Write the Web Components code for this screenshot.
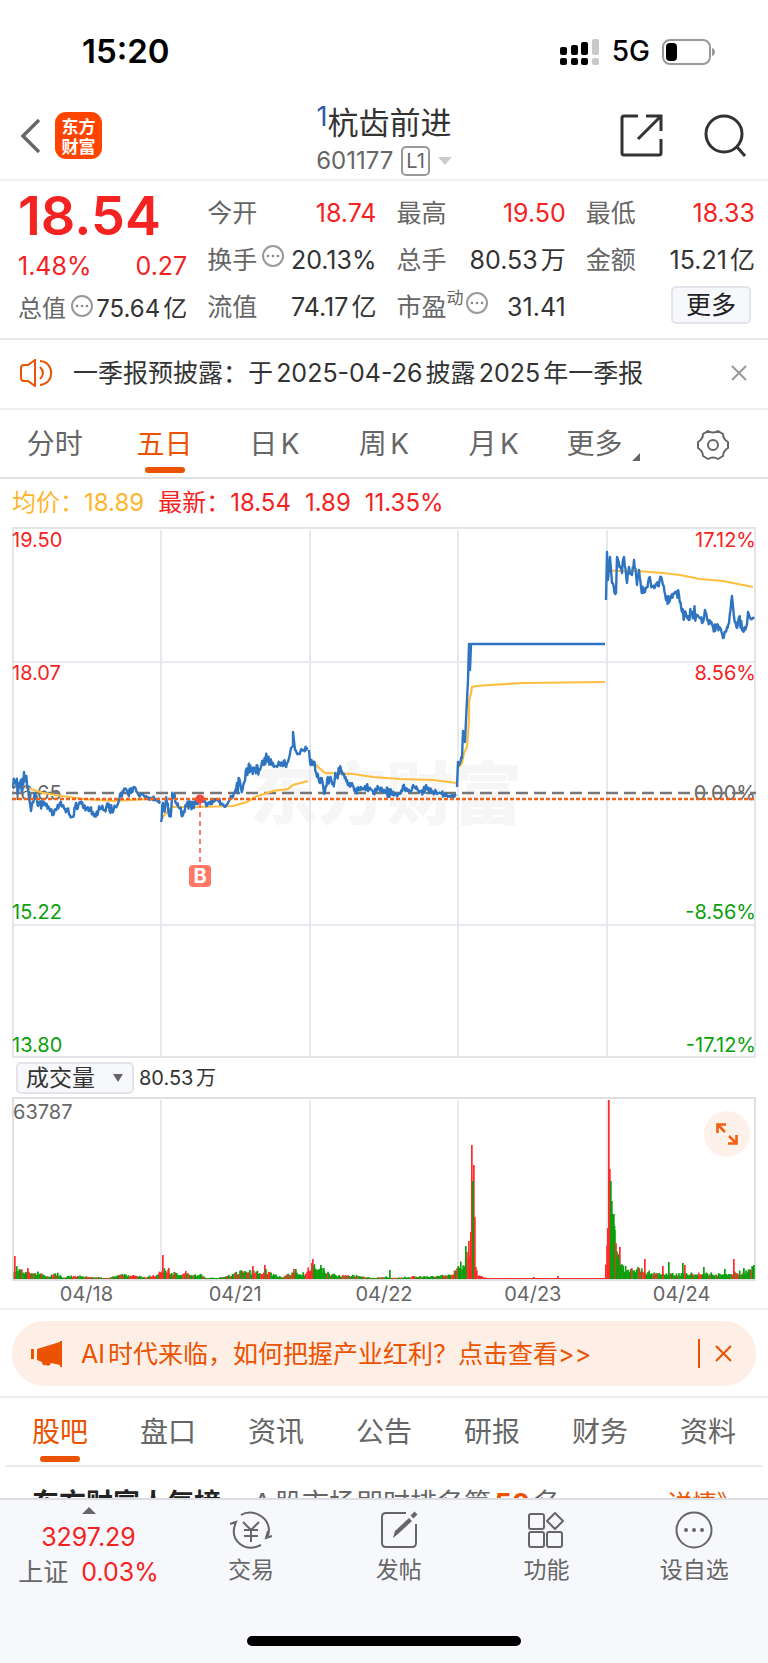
<!DOCTYPE html>
<html lang="zh-CN">
<head>
<meta charset="UTF-8">
<meta name="viewport" content="width=device-width, initial-scale=1">
<title>杭齿前进 601177</title>
<style>
    :root {
        --red: #f52222;
        --green: #0a9f0a;
        --orange: #ec5300;
        --text: #333;
        --muted: #666;
        --line: #e8e8ea;
        --panel: #f7f8fb;
    }
    body {
        margin: 0;
        background: #fff;
        color: var(--text);
        font-family: Inter, "Noto Sans CJK SC", sans-serif;
        line-height: 1.2;
        text-autospace: normal;
    }
</style>
</head>
<body>
<stock-app></stock-app>

<script>
const BASE = `
    * { box-sizing: border-box; }
    button, select { font: inherit; color: inherit; background: none; border: 0; padding: 0; margin: 0; cursor: pointer; }
    a { color: inherit; text-decoration: none; }
    svg { display: block; flex: none; }
`;

function define(tag, html, setup) {
    customElements.define(tag, class extends HTMLElement {
        connectedCallback() {
            if (this.shadowRoot) return;
            this.attachShadow({ mode: 'open' });
            this.shadowRoot.innerHTML = `<style>${BASE}</style>${html}`;
            if (setup) setup(this.shadowRoot, this);
        }
    });
}

// small repeatable random source for minute noise
function noise(seed) {
    return () => {
        seed = (seed * 16807) % 2147483647;
        return seed / 2147483647;
    };
}

define('status-bar', `
    <style>
        :host {
            display: flex;
            align-items: center;
            justify-content: space-between;
            height: 92px;
            padding: 12px 52px 0 82px;
            color: #000;
        }
        time { font-size: 33px; font-weight: 600; }
        .right { display: flex; align-items: center; gap: 12px; font-size: 28px; font-weight: 500; }
    </style>
    <time>15:20</time>
    <div class="right">
        <svg width="40" height="26" viewBox="0 0 40 26">
            <rect x="0" y="8" width="7" height="8" rx="2"/>
            <rect x="11" y="6" width="7" height="10" rx="2"/>
            <rect x="21" y="3" width="7" height="13" rx="2"/>
            <rect x="32" y="0" width="7" height="16" rx="2" fill="#c9c9c9"/>
            <rect x="0" y="19" width="7" height="7" rx="2"/>
            <rect x="11" y="19" width="7" height="7" rx="2"/>
            <rect x="21" y="19" width="7" height="7" rx="2"/>
            <rect x="32" y="19" width="7" height="7" rx="2" fill="#c9c9c9"/>
        </svg>
        <span>5G</span>
        <svg width="54" height="26" viewBox="0 0 54 26">
            <rect x="1" y="1" width="47" height="24" rx="7" fill="none" stroke="#999" stroke-width="2"/>
            <rect x="4" y="4" width="11" height="18" rx="4"/>
            <path d="M50 9c4 1 4 7 0 8z" fill="#999"/>
        </svg>
    </div>
`);

define('stock-header', `
    <style>
        :host {
            display: grid;
            grid-template-columns: 1fr auto 1fr;
            align-items: center;
            height: 89px;
            padding: 0 21px;
            border-bottom: 2px solid #f0f0f0;
        }
        .left, .right { display: flex; align-items: center; }
        .left { gap: 14px; }
        .right { justify-content: flex-end; gap: 41px; }
        .logo {
            width: 47px;
            height: 47px;
            padding-top: 4px;
            border-radius: 11px;
            background: #ff4400;
            color: #fff;
            font: 700 17px/20px "Noto Sans CJK SC", sans-serif;
            text-align: center;
        }
        .title { align-self: end; text-align: center; }
        h1 {
            display: flex;
            justify-content: center;
            margin: 0;
            font-size: 31px;
            font-weight: 400;
            line-height: 40px;
        }
        sup { font-size: 27px; line-height: 28px; color: #2b57a8; }
        .code {
            display: flex;
            align-items: center;
            justify-content: center;
            gap: 8px;
            font-size: 24px;
            line-height: 36px;
            color: var(--muted);
        }
        .level {
            padding: 0 3px;
            border: 2px solid #999;
            border-radius: 5px;
            font-size: 20px;
            line-height: 26px;
        }
    </style>
    <div class="left">
        <button aria-label="返回">
            <svg width="20" height="34" viewBox="0 0 20 34" fill="none" stroke="#666" stroke-width="3.4"><path d="M18 1 2 17l16 16"/></svg>
        </button>
        <div class="logo">东方<br>财富</div>
    </div>
    <div class="title">
        <h1><sup>1</sup>杭齿前进</h1>
        <div class="code">601177<span class="level">L1</span>
            <svg width="14" height="8" viewBox="0 0 14 8"><path d="M0 0h14L7 8z" fill="#ccc"/></svg>
        </div>
    </div>
    <div class="right">
        <button aria-label="分享">
            <svg width="43" height="43" viewBox="0 0 43 43" fill="none" stroke="#333" stroke-width="3">
                <path d="M18 2H4q-2 0-2 2v35q0 2 2 2h35q2 0 2-2V25M26 2h15v15M41 2 18 25"/>
            </svg>
        </button>
        <button aria-label="搜索">
            <svg width="43" height="43" viewBox="0 0 43 43" fill="none" stroke="#333" stroke-width="3">
                <circle cx="20" cy="20" r="18"/><path d="m33 33 8 9"/>
            </svg>
        </button>
    </div>
`);

define('more-dots', `
    <style>:host { display: inline-block; }</style>
    <svg width="22" height="22" viewBox="0 0 22 22">
        <circle cx="11" cy="11" r="10" fill="none" stroke="#999" stroke-width="2"/>
        <g fill="#888"><circle cx="6" cy="11" r="1.3"/><circle cx="11" cy="11" r="1.3"/><circle cx="16" cy="11" r="1.3"/></g>
    </svg>
`);

define('quote-item', `
    <style>
        :host {
            display: flex;
            align-items: center;
            justify-content: space-between;
            font-size: 25px;
            white-space: nowrap;
        }
        .label { display: flex; align-items: center; color: var(--muted); }
        :host([up]) .value { color: var(--red); }
    </style>
    <span class="label"><slot name="label"></slot></span>
    <span class="value"><slot></slot></span>
`);

define('quote-panel', `
    <style>
        :host {
            display: grid;
            grid-template-columns: repeat(4, minmax(0, 1fr));
            column-gap: 20px;
            padding: 8px 13px 8px 18px;
            border-bottom: 2px solid var(--line);
        }
        .main { display: grid; grid-template-rows: 54px 45px 42px; }
        .main quote-item { font-size: 24px; }
        .price { font-size: 54px; font-weight: 600; line-height: 54px; color: var(--red); }
        .change { display: flex; align-items: center; justify-content: space-between; font-size: 25px; color: var(--red); }
        .grid { grid-column: span 3; display: grid; grid-template-columns: repeat(3, minmax(0, 1fr)); grid-auto-rows: 47px; column-gap: 20px; }
        more-dots { align-self: start; margin-left: 5px; }
        .small { align-self: start; margin-top: -4px; font-size: 17px; }
        .small + more-dots { margin-left: 2px; }
        .more {
            justify-self: end;
            align-self: center;
            padding: 0 13px;
            margin: 0 4px 4px 0;
            border: 2px solid #e2e4ea;
            border-radius: 5px;
            background: var(--panel);
            font-size: 25px;
            line-height: 34px;
            color: #222;
        }
    </style>
    <div class="main">
        <div class="price">18.54</div>
        <div class="change"><span>1.48%</span><span>0.27</span></div>
        <quote-item><span slot="label">总值</span><more-dots slot="label"></more-dots>75.64亿</quote-item>
    </div>
    <div class="grid">
        <quote-item up><span slot="label">今开</span>18.74</quote-item>
        <quote-item up><span slot="label">最高</span>19.50</quote-item>
        <quote-item up><span slot="label">最低</span>18.33</quote-item>
        <quote-item><span slot="label">换手</span><more-dots slot="label"></more-dots>20.13%</quote-item>
        <quote-item><span slot="label">总手</span>80.53万</quote-item>
        <quote-item><span slot="label">金额</span>15.21亿</quote-item>
        <quote-item><span slot="label">流值</span>74.17亿</quote-item>
        <quote-item><span slot="label">市盈</span><span slot="label" class="small">动</span><more-dots slot="label"></more-dots>31.41</quote-item>
        <button class="more">更多</button>
    </div>
`);

define('notice-bar', `
    <style>
        :host {
            display: flex;
            align-items: center;
            gap: 20px;
            height: 70px;
            padding: 0 21px 2px 20px;
            border-bottom: 2px solid #efefef;
            font-size: 25px;
            white-space: nowrap;
        }
        a { flex: 1; }
    </style>
    <svg width="33" height="28" viewBox="0 0 33 28" fill="none" stroke="#ec5300" stroke-width="2">
        <path d="M15 1v26l-7-5H4q-3 0-3-3V9q0-3 3-3h4zM20 8q6 6 0 12M20 2c15 1 15 23 0 24"/>
    </svg>
    <a href="#">一季报预披露：于2025-04-26披露2025年一季报</a>
    <button aria-label="关闭">
        <svg width="16" height="16" viewBox="0 0 16 16" stroke="#999" stroke-width="2"><path d="m1 1 14 14M15 1 1 15"/></svg>
    </button>
`);

define('tab-item', `
    <style>
        :host { display: flex; justify-content: center; flex: 1; font-size: 28px; color: var(--muted); }
        button { display: grid; justify-items: center; grid-template-rows: 1fr 6px; width: 100%; padding: 12px 0 var(--tab-bottom, 4px); white-space: nowrap; }
        span { display: flex; align-items: center; }
        i { width: 40px; height: 6px; border-radius: 3px; }
        :host([active]) { color: var(--orange); }
        :host([active]) i { background: var(--orange); }
    </style>
    <button><span><slot></slot></span><i></i></button>
`);

define('tab-row', `
    <style>
        :host { display: flex; align-items: stretch; height: 69px; border-bottom: 2px solid #dfe1e7; }
    </style>
    <slot></slot>
`);

define('price-chart', `
    <style>
        :host { display: block; padding: 0 12px; }
        .legend { display: flex; align-items: center; height: 48px; gap: 14px; font-size: 24px; color: var(--red); white-space: nowrap; }
        .avg { color: #ffb52e; }
        .plot { display: grid; }
        svg { grid-area: 1 / 1; width: 100%; height: auto; }
        .scale {
            grid-area: 1 / 1;
            display: grid;
            grid-template-rows: repeat(4, minmax(0, 1fr));
            justify-content: start;
            font-size: 20px;
            line-height: 26px;
            color: var(--red);
        }
        .scale.right { justify-content: end; text-align: right; }
        .scale span:nth-child(3) { grid-row: 3; grid-column: 1; margin-top: -13px; color: var(--muted); }
        .scale span:nth-child(4) { grid-row: 3; grid-column: 1; align-self: end; color: var(--green); }
        .scale span:nth-child(5) { align-self: end; color: var(--green); }
        .mark { font: 900 68px "Noto Sans CJK SC", sans-serif; fill: #f6f6f6; }
        .b { font: 700 20px Inter, sans-serif; fill: #fff; }
    </style>
    <div class="legend">
        <span class="avg">均价：18.89</span><span>最新：18.54</span><span>1.89</span><span>11.35%</span>
    </div>
    <div class="plot">
        <svg viewBox="0 0 744 531" aria-hidden="true">
            <text class="mark" x="374" y="292" text-anchor="middle">东方财富</text>
            <g fill="none" stroke="#e6e9f0" stroke-width="2">
                <path d="M1 135h742M1 398h742M149 3v526M298 3v526M446 3v526M595 3v526"/>
                <rect x="1" y="1" width="742" height="529" stroke="#e3e5e9"/>
            </g>
        </svg>
        <div class="scale"><span>19.50</span><span>18.07</span><span>16.65</span><span>15.22</span><span>13.80</span></div>
        <div class="scale right"><span>17.12%</span><span>8.56%</span><span>0.00%</span><span>-8.56%</span><span>-17.12%</span></div>
        <svg viewBox="0 0 744 531" fill="none" role="img" aria-label="五日走势">
            <path d="M0 266h744" stroke="#777" stroke-width="2.6" stroke-dasharray="12 6"/>
            <g id="avg" stroke="#ffbd3f" stroke-width="2.2"></g>
            <g id="price" stroke="#2f74c0" stroke-width="2.4" stroke-linejoin="round"></g>
            <path d="M0 272h744" stroke="#f0641e" stroke-width="2.4" stroke-dasharray="4 2"/>
            <path d="M188 276v62" stroke="#ff7766" stroke-width="2" stroke-dasharray="5 4"/>
            <circle cx="188" cy="272" r="4.5" fill="#ee4b3a"/>
            <rect x="177" y="338" width="22" height="22" rx="4" fill="#ff7766"/>
            <text class="b" x="188" y="356" text-anchor="middle">B</text>
        </svg>
    </div>
`, root => {
    // [x, y, jitter], one list per trading day
    const price = [
        [[1,261,7],[8,260,8],[12,245,5],[16,260,7],[19,284,2],[23,266,4],[26,279,3],[33,276,3],[38,284,3],[41,288,2],[48,276,2],[53,282,3],[61,290,2],[64,276,5],[68,275,4],[75,281,3],[83,287,3],[88,282,3],[96,280,4],[100,284,3],[105,279,2],[109,266,4],[116,267,3],[122,260,2],[126,267,2],[135,270,2],[148,274,2]],
        [[149,295,4],[151,276,7],[155,276,7],[158,283,8],[161,271,6],[165,278,3],[171,288,3],[175,276,4],[181,278,3],[188,273,3],[196,276,2],[206,273,2],[213,280,1],[218,272,3],[221,270,2],[225,256,7],[229,261,5],[233,254,7],[236,245,6],[243,241,6],[248,243,4],[251,234,4],[255,231,5],[261,236,3],[266,238,3],[275,236,1],[277,231,1],[279,221,0],[281,219,0],[281,205,0],[283,223,1],[286,227,2],[291,223,2],[296,221,1]],
        [[297,223,1],[298,235,6],[301,238,6],[305,250,5],[309,251,5],[313,264,2],[316,250,5],[321,256,5],[329,243,3],[335,253,4],[340,256,3],[343,264,3],[348,263,2],[353,259,3],[360,263,4],[368,264,4],[378,266,3],[386,267,3],[391,259,2],[396,264,2],[402,260,2],[408,265,3],[415,261,3],[421,265,2],[428,266,2],[435,269,1],[444,269,1]],
        [[445,260,0],[446,235,0],[447,238,3],[450,231,2],[451,204,0],[453,215,0],[454,193,0],[456,153,0],[457,117,0],[458,143,0],[459,117,0],[593,117,0]],
        [[594,73,0],[595,25,0],[596,53,0],[598,30,0],[600,56,3],[604,66,0],[605,30,2],[610,46,5],[612,30,2],[615,56,4],[617,40,5],[620,48,4],[622,33,3],[625,58,5],[627,43,2],[629,60,4],[633,65,3],[637,51,3],[640,60,3],[646,59,2],[649,50,1],[651,58,2],[654,73,5],[658,73,5],[663,65,4],[667,68,4],[670,85,5],[675,91,4],[680,85,6],[685,88,4],[690,96,6],[693,83,4],[696,93,4],[701,100,4],[708,101,2],[711,111,2],[715,100,3],[717,96,3],[720,69,0],[722,90,2],[725,101,3],[727,90,5],[730,103,3],[735,97,3],[736,85,0],[738,91,1],[742,92,0]]
    ];
    const avg = [
        'M13 260 31 266 50 269 71 272 101 274 135 272 148 272',
        'M150 291 155 285 160 280 188 280 221 279 235 275 243 270 261 264 276 262 281 258 296 254',
        'M301 234 306 240 313 246 341 247 361 250 388 252 421 253 445 256',
        'M447 240 450 236 452 226 455 220 457 193 457 175 459 166 460 160 465 159 478 158 511 156 593 155',
        'M595 43 605 44 625 44 651 46 668 48 688 52 711 54 741 60'
    ];
    const rnd = noise(77);
    root.getElementById('avg').innerHTML = avg.map(d => `<path d="${d}"/>`).join('');
    root.getElementById('price').innerHTML = price.map(day => {
        const pts = [];
        day.forEach(([x, y, j], i) => {
            pts.push(`${x} ${y}`);
            const next = day[i + 1];
            if (!next || !j) return;
            const steps = Math.round((next[0] - x) / 0.8);
            for (let k = 1; k < steps; k++) {
                const t = k / steps;
                const dy = (rnd() * 2 - 1) * j * 1.3;
                pts.push(`${(x + (next[0] - x) * t).toFixed(1)} ${(y + (next[1] - y) * t + dy).toFixed(1)}`);
            }
        });
        return `<path d="M${pts.join(' ')}"/>`;
    }).join('');
});

define('volume-chart', `
    <style>
        :host { display: block; padding: 0 12px; border-bottom: 2px solid #f0f0f0; }
        .head { display: flex; align-items: center; gap: 5px; height: 39px; padding-left: 4px; font-size: 20px; }
        .pick { display: flex; align-items: center; position: relative; }
        .pick svg { position: absolute; right: 11px; pointer-events: none; }
        select {
            appearance: none;
            width: 118px;
            height: 32px;
            padding-left: 8px;
            border: 2px solid #e2e4ea;
            border-radius: 5px;
            background: var(--panel);
            font-size: 23px;
            line-height: 28px;
        }
        .plot { display: grid; }
        .plot > * { grid-area: 1 / 1; }
        .plot > svg { width: 100%; height: auto; }
        .max { padding: 3px 1px; font-size: 20px; line-height: 24px; color: var(--muted); }
        .expand {
            justify-self: end;
            align-self: start;
            display: grid;
            place-items: center;
            width: 46px;
            height: 46px;
            margin: 14px 6px;
            border-radius: 50%;
            background: #fef1ea;
        }
        .days { display: flex; font-size: 20px; line-height: 27px; color: var(--muted); }
        .days span { flex: 1; text-align: center; }
    </style>
    <div class="head">
        <div class="pick">
            <select aria-label="指标"><option>成交量</option></select>
            <svg width="10" height="8" viewBox="0 0 10 8"><path d="M0 0h10L5 8z" fill="#666"/></svg>
        </div>
        <span>80.53万</span>
    </div>
    <div class="plot">
        <svg viewBox="0 0 744 184" role="img" aria-label="成交量">
            <path d="M149 3v180M298 3v180M446 3v180M595 3v180" stroke="#e6e9f0" stroke-width="2"/>
            <rect x="1" y="1" width="742" height="182" fill="none" stroke="#dddfe3" stroke-width="2"/>
            <g id="bars"></g>
        </svg>
        <div class="max">63787</div>
        <button class="expand" aria-label="全屏">
            <svg width="22" height="22" viewBox="0 0 22 22" fill="none" stroke="#f06010" stroke-width="2.6"><path d="M1.5 10V1.5H10M1.5 1.5 9 9M20.5 12v8.5H12M20.5 20.5 13 13"/></svg>
        </button>
    </div>
    <div class="days"><span>04/18</span><span>04/21</span><span>04/22</span><span>04/23</span><span>04/24</span></div>
`, root => {
    // upper envelope [x, height, share of red]
    const shape = [
        [1,14,.3],[10,10,.2],[22,7,.2],[30,8,.1],[34,3,.4],[45,6,.3],[50,2,.2],[60,4,.2],[76,3,.4],[95,1,.5],[108,5,.6],[122,4,.3],[132,2,.2],[146,6,.5],
        [150,12,.3],[160,8,.2],[175,6,.2],[188,5,.4],[194,1,.3],[210,2,.3],[222,6,.4],[230,9,.5],[242,9,.4],[260,6,.2],[270,2,.5],[280,9,.7],[284,6,.2],[292,7,.7],
        [298,17,.1],[306,12,.1],[312,9,.1],[320,5,.2],[332,4,.4],[345,4,.2],[360,1,.3],[372,3,.3],[380,1,.2],[400,3,.2],[420,3,.2],[438,5,.2],[446,17,.3],
        [451,17,.6],[456,35,.9],[462,12,1],[466,4,1],[474,1,1],[592,1,1],[596,60,.2],[600,62,0],[603,38,0],[607,20,.1],[610,13,.1],[620,12,.1],[630,10,.3],[642,6,.3],[652,6,.2],[665,6,.2],[690,6,.2],[700,6,.2],[716,6,.3],[728,8,.2],[738,11,.3],[743,14,.4]
    ];
    const spikes = [
        [2,23,'r'],[15,11,'r'],[150,24,'r'],[156,11,'r'],[173,8,'r'],[240,13,'r'],[252,14,'r'],[253,10,'g'],[281,10,'r'],[283,10,'g'],[299,16,'r'],[300,20,'r'],[301,13,'g'],
        [308,14,'g'],[311,11,'g'],[377,9,'g'],[453,33,'g'],[456,38,'r'],[458,47,'r'],[459,134,'r'],[461,114,'r'],[460,98,'g'],[462,62,'r'],[463,12,'r'],
        [521,2,'r'],[545,3,'r'],[595,51,'r'],[597,110,'r'],[596,179,'r'],[598,98,'g'],[599,78,'g'],[600,65,'g'],[601,65,'g'],[602,49,'g'],[603,36,'r'],[604,22,'g'],[605,22,'g'],[607,32,'r'],[606,20,'g'],
        [608,14,'g'],[632,20,'r'],[650,13,'r'],[656,17,'g'],[670,16,'g'],[672,14,'r'],[691,12,'g'],[712,10,'g'],[721,20,'r'],[731,11,'g'],[741,14,'g']
    ];
    const color = { r: '#ff2a2a', g: '#0a9f0a' };
    const bar = (x, h, c) => `<rect x="${x.toFixed(2)}" y="${(182 - h).toFixed(1)}" width="1.7" height="${h.toFixed(1)}" fill="${color[c]}"/>`;
    const rnd = noise(2025);
    let out = '';
    for (let x = 1.5, i = 0; x < 741; x += 1.24) {
        while (shape[i + 1][0] < x) i++;
        const [x0, h0, red] = shape[i];
        const [x1, h1] = shape[i + 1];
        const top = h0 + (h1 - h0) * Math.max(0, (x - x0) / (x1 - x0));
        out += bar(x, Math.max(1, top * (0.5 + rnd() * 0.6)), rnd() < red ? 'r' : 'g');
    }
    root.getElementById('bars').innerHTML = out + spikes.map(s => bar(...s)).join('');
});

define('promo-banner', `
    <style>
        :host { display: block; padding: 11px 12px 10px; border-bottom: 2px solid #ececee; color: var(--orange); }
        .box { display: flex; align-items: center; height: 65px; padding: 0 24px 0 19px; border-radius: 33px; background: #fdeee6; font-size: 25px; white-space: nowrap; }
        a { flex: 1; margin-left: 19px; }
        button { padding: 6px 0 6px 15px; border-left: 2px solid var(--orange); }
    </style>
    <div class="box">
        <svg width="31" height="26" viewBox="0 0 31 26" fill="#ec5300"><path d="M0 8h3v10H0zM6 8 29 1V0h2v26h-2v-2l-9-2q-1 4-5 2-4 1-4-3l-5-2z"/></svg>
        <a href="#">AI时代来临，如何把握产业红利？点击查看&gt;&gt;</a>
        <button aria-label="关闭"><svg width="17" height="17" viewBox="0 0 17 17" stroke="#ec5300" stroke-width="2"><path d="m1 1 15 15M16 1 1 16"/></svg></button>
    </div>
`);

define('rank-row', `
    <style>
        :host { display: flex; align-items: center; padding: 18px 26px 0 32px; font-size: 27px; line-height: 38px; color: var(--muted); white-space: nowrap; }
        strong { color: #222; margin-right: 32px; }
        p { flex: 1; margin: 0; }
        b, a { color: var(--orange); }
        a { font-size: 25px; }
    </style>
    <strong>东方财富人气榜</strong>
    <p>A股市场即时排名第<b>50</b>名</p>
    <a href="#">详情》</a>
`);

define('bottom-bar', `
    <style>
        :host { display: block; background: var(--panel); border-top: 2px solid #dcdee4; padding-bottom: 17px; color: var(--muted); }
        nav { display: grid; grid-template-columns: 177px repeat(4, 1fr); height: 136px; }
        button { display: flex; flex-direction: column; align-items: center; }
        .index { padding-top: 7px; font-size: 25px; line-height: 35px; color: var(--red); }
        .index svg { margin-bottom: 6px; }
        .index small { font-size: 25px; color: var(--muted); margin-right: 10px; }
        .tool { gap: 4px; padding-top: 10px; font-size: 23px; line-height: 32px; }
        .home { width: 274px; height: 10px; margin: 0 auto; border-radius: 5px; background: #000; }
    </style>
    <nav>
        <button class="index">
            <svg width="14" height="7" viewBox="0 0 14 7"><path d="M7 0l7 7H0z" fill="#666"/></svg>
            <span>3297.29</span>
            <span><small>上证</small>0.03%</span>
        </button>
        <button class="tool">
            <svg width="44" height="40" viewBox="0 0 44 40" fill="none" stroke="#666" stroke-width="2">
                <path d="M12 5C22-1 39 5 40 20q0 4-2 8M1 14l6-2q-6 14 4 22 9 7 21 1M43 26l-6 2 2-7M14 12l8 8 8-8M15 20h14M15 26h14M22 19v13"/>
            </svg>交易
        </button>
        <button class="tool">
            <svg width="40" height="40" viewBox="0 0 40 40" fill="none" stroke="#666" stroke-width="2">
                <path d="M27 3H7Q3 3 3 7v26q0 4 4 4h26q4 0 4-4V14"/>
                <path d="M14 28l2-7L30 8l3 3-14 13z" fill="#666" stroke="none"/><path d="m33 7 4-4" stroke-width="4"/>
            </svg>发帖
        </button>
        <button class="tool">
            <svg width="40" height="40" viewBox="0 0 40 40" fill="none" stroke="#666" stroke-width="2">
                <rect x="3" y="4" width="15" height="15" rx="2"/><rect x="3" y="22" width="15" height="15" rx="2"/><rect x="21" y="22" width="15" height="15" rx="2"/>
                <path d="m29 3 8 8-8 8-8-8z" stroke-linejoin="round"/>
            </svg>功能
        </button>
        <button class="tool">
            <svg width="40" height="40" viewBox="0 0 40 40">
                <circle cx="20" cy="20" r="17.5" fill="none" stroke="#666" stroke-width="2"/>
                <g fill="#666"><circle cx="12" cy="20" r="2"/><circle cx="20" cy="20" r="2"/><circle cx="28" cy="20" r="2"/></g>
            </svg>设自选
        </button>
    </nav>
    <div class="home"></div>
`);

define('stock-app', `
    <style>
        :host { display: flex; flex-direction: column; height: 100vh; }
        main { flex: 1; min-height: 0; overflow: hidden; }
        .corner { align-self: end; margin: 0 0 6px 10px; }
        .info { margin: 0 6px; --tab-bottom: 3px; border-bottom-color: #e8e8ea; }
    </style>
    <main>
        <status-bar></status-bar>
        <stock-header></stock-header>
        <quote-panel></quote-panel>
        <notice-bar></notice-bar>
        <tab-row>
            <tab-item>分时</tab-item>
            <tab-item active>五日</tab-item>
            <tab-item>日K</tab-item>
            <tab-item>周K</tab-item>
            <tab-item>月K</tab-item>
            <tab-item>更多<svg class="corner" width="8" height="8" viewBox="0 0 8 8"><path d="M8 0v8H0z" fill="#666"/></svg></tab-item>
            <tab-item><svg width="32" height="32" viewBox="0 0 32 32" fill="none" stroke="#666" stroke-width="2" stroke-linejoin="round" role="img" aria-label="设置">
                <path d="M11 2q5 3 10 0l5 3q0 5 5 8v6q-5 3-5 8l-5 3q-5-3-10 0l-5-3q0-5-5-8v-6q5-3 5-8z"/><circle cx="16" cy="16" r="5"/>
            </svg></tab-item>
        </tab-row>
        <price-chart></price-chart>
        <volume-chart></volume-chart>
        <promo-banner></promo-banner>
        <tab-row class="info">
            <tab-item active>股吧</tab-item>
            <tab-item>盘口</tab-item>
            <tab-item>资讯</tab-item>
            <tab-item>公告</tab-item>
            <tab-item>研报</tab-item>
            <tab-item>财务</tab-item>
            <tab-item>资料</tab-item>
        </tab-row>
        <rank-row></rank-row>
    </main>
    <bottom-bar></bottom-bar>
`);
</script>
</body>
</html>
